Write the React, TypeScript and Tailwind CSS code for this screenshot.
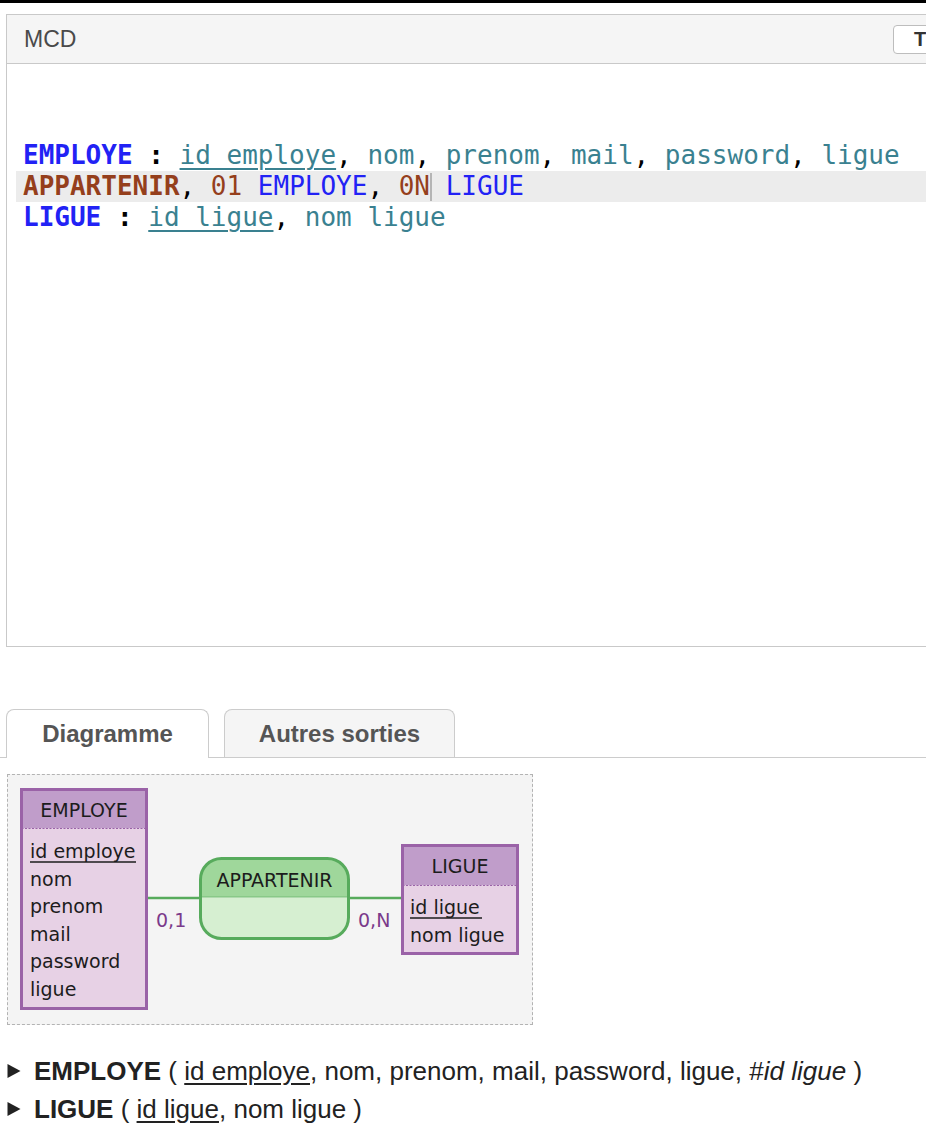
import React from 'react';

// ============================================================
// Constants
// ============================================================

const SANS = "font-['Liberation_Sans',Arial,sans-serif]";
const MONO = "font-['DejaVu_Sans_Mono',monospace]";

const C_ENTITY = 'text-[#2222f5]';
const C_ATTR = 'text-[#3a8190]';
const C_ASSOC = 'text-[#953f1c]';

// ============================================================
// Code editor
// ============================================================

const CodeEditor: React.FC = () => (
  <div className={`${MONO} h-[582px] pt-[76px] pl-[9px] text-[26px] leading-[31px] whitespace-pre`}>
    <div className="h-[31px] pl-[7px]">
      <span className={`${C_ENTITY} font-bold`}>EMPLOYE</span>
      <span className="font-bold text-black"> : </span>
      <span className={`${C_ATTR} underline underline-offset-[4px] decoration-[2px]`}>id employe</span>
      <span className="text-black">, </span>
      <span className={C_ATTR}>nom</span>
      <span className="text-black">, </span>
      <span className={C_ATTR}>prenom</span>
      <span className="text-black">, </span>
      <span className={C_ATTR}>mail</span>
      <span className="text-black">, </span>
      <span className={C_ATTR}>password</span>
      <span className="text-black">, </span>
      <span className={C_ATTR}>ligue</span>
    </div>
    <div className="h-[31px] pl-[7px] bg-[#ececec]">
      <span className={`${C_ASSOC} font-bold`}>APPARTENIR</span>
      <span className="text-black">, </span>
      <span className={C_ASSOC}>01</span>
      <span className={C_ENTITY}> EMPLOYE</span>
      <span className="text-black">, </span>
      <span className={C_ASSOC}>0N</span>
      <span className="inline-block w-[2px] h-[28px] bg-[#b5b5b5] align-[-6px] -mr-[2px]" />
      <span className={C_ENTITY}> LIGUE</span>
    </div>
    <div className="h-[31px] pl-[7px]">
      <span className={`${C_ENTITY} font-bold`}>LIGUE</span>
      <span className="font-bold text-black"> : </span>
      <span className={`${C_ATTR} underline underline-offset-[4px] decoration-[2px]`}>id ligue</span>
      <span className="text-black">, </span>
      <span className={C_ATTR}>nom ligue</span>
    </div>
  </div>
);

// ============================================================
// Diagram (drawing)
// ============================================================

const ENT_STROKE = '#9a62a7';
const ENT_HEAD = '#c09dca';
const ENT_BODY = '#e7d1e5';
const ASSOC_STROKE = '#57ab5c';
const ASSOC_HEAD = '#9fd79b';
const ASSOC_BODY = '#d6efd1';
const CARD = '#7b3a8b';
const INK = '#1c1c1c';
const DIAG_FONT = "'DejaVu Sans', Verdana, sans-serif";

const Diagram: React.FC = () => (
  <svg width={524} height={249} viewBox="0 0 524 249" fontFamily={DIAG_FONT} fontSize={19}>
    {/* links */}
    <line x1={140} y1={123} x2={192} y2={123} stroke={ASSOC_STROKE} strokeWidth={2.5} />
    <line x1={341} y1={123} x2={394} y2={123} stroke={ASSOC_STROKE} strokeWidth={2.5} />

    {/* EMPLOYE */}
    <rect x={13.5} y={14.5} width={125} height={39} fill={ENT_HEAD} />
    <rect x={13.5} y={53.5} width={125} height={180} fill={ENT_BODY} />
    <line x1={13.5} y1={53.5} x2={138.5} y2={53.5} stroke={ENT_STROKE} strokeWidth={1.2} strokeDasharray="2 1.5" />
    <rect x={13.5} y={14.5} width={125} height={219} fill="none" stroke={ENT_STROKE} strokeWidth={3} />
    <text x={76} y={42} textAnchor="middle" fill={INK}>EMPLOYE</text>
    <text x={22} y={83} fill={INK}>id employe</text>
    <line x1={22} y1={87} x2={128} y2={87} stroke={INK} strokeWidth={1.5} />
    <text x={22} y={111} fill={INK}>nom</text>
    <text x={22} y={138} fill={INK}>prenom</text>
    <text x={22} y={166} fill={INK}>mail</text>
    <text x={22} y={193} fill={INK}>password</text>
    <text x={22} y={221} fill={INK}>ligue</text>

    {/* APPARTENIR */}
    <defs>
      <clipPath id="assoc-clip">
        <rect x={192.5} y={83.5} width={148} height={80} rx={21} />
      </clipPath>
    </defs>
    <g clipPath="url(#assoc-clip)">
      <rect x={190} y={80} width={154} height={42} fill={ASSOC_HEAD} />
      <rect x={190} y={122} width={154} height={46} fill={ASSOC_BODY} />
    </g>
    <line x1={192.5} y1={122} x2={340.5} y2={122} stroke={ASSOC_STROKE} strokeWidth={1} opacity={0.6} />
    <rect x={192.5} y={83.5} width={148} height={80} rx={21} fill="none" stroke={ASSOC_STROKE} strokeWidth={3} />
    <text x={266.5} y={112} textAnchor="middle" fill={INK}>APPARTENIR</text>

    {/* cardinalities */}
    <text x={148} y={152} fill={CARD}>0,1</text>
    <text x={350} y={152} fill={CARD}>0,N</text>

    {/* LIGUE */}
    <rect x={394.5} y={70.5} width={115} height={40} fill={ENT_HEAD} />
    <rect x={394.5} y={110.5} width={115} height={68} fill={ENT_BODY} />
    <line x1={394.5} y1={110.5} x2={509.5} y2={110.5} stroke={ENT_STROKE} strokeWidth={1.2} strokeDasharray="2 1.5" />
    <rect x={394.5} y={70.5} width={115} height={108} fill="none" stroke={ENT_STROKE} strokeWidth={3} />
    <text x={452} y={98} textAnchor="middle" fill={INK}>LIGUE</text>
    <text x={402} y={139} fill={INK}>id ligue</text>
    <line x1={402} y1={143} x2={474} y2={143} stroke={INK} strokeWidth={1.5} />
    <text x={402} y={167} fill={INK}>nom ligue</text>
  </svg>
);

// ============================================================
// Relational schema rows
// ============================================================

const Caret: React.FC = () => (
  <svg width={14} height={16} viewBox="0 0 14 16" className="shrink-0">
    <polygon points="0.5,1 13.5,8 0.5,15" fill="#222" />
  </svg>
);

const SchemaRow: React.FC<{ children: React.ReactNode }> = ({ children }) => (
  <div className="flex items-center h-[38px] pl-[7px]">
    <Caret />
    <div className="ml-[13px] whitespace-pre">{children}</div>
  </div>
);

// ============================================================
// App
// ============================================================

export default function App() {
  return (
    <div className={`${SANS} w-[926px] h-[1136px] overflow-hidden bg-white relative`}>
      <div className="h-[3px] bg-black" />

      {/* MCD panel */}
      <div className="mt-[11px] ml-[6px] w-[960px] border border-[#c9c9c9]">
        <div className="h-[49px] bg-[#f5f5f5] border-b border-[#c9c9c9] flex items-center justify-between pl-[17px]">
          <span className="text-[23px] text-[#4a4a4a]">MCD</span>
          <div className="h-[29px] w-[72px] rounded-[4px] border border-[#bdbdbd] bg-white pl-[20px] flex items-center text-[20px] font-bold text-[#333]">
            T
          </div>
        </div>
        <CodeEditor />
      </div>

      {/* tabs */}
      <div className="mt-[62px] flex items-end gap-[15px] pl-[6px] border-b border-[#cccccc]">
        <div className="-mb-px h-[49px] w-[203px] rounded-t-[8px] border border-b-0 border-[#cccccc] bg-white flex items-center justify-center text-[24px] font-bold text-[#555]">
          Diagramme
        </div>
        <div className="h-[48px] w-[231px] rounded-t-[8px] border border-b-0 border-[#cccccc] bg-[#f5f5f5] flex items-center justify-center text-[24px] font-bold text-[#555]">
          Autres sorties
        </div>
      </div>

      {/* diagram */}
      <div className="mt-[16px] ml-[7px] w-[526px] h-[251px] border border-dashed border-[#b3b3b3] bg-[#f4f4f4]">
        <Diagram />
      </div>

      {/* relational schema */}
      <div className="mt-[27px] text-[26px] text-[#222]">
        <SchemaRow>
          <span className="font-bold">EMPLOYE</span>
          {' ( '}
          <span className="underline underline-offset-[3px]">id employe</span>
          {', nom, prenom, mail, password, ligue, #'}
          <span className="italic">id ligue</span>
          {' )'}
        </SchemaRow>
        <SchemaRow>
          <span className="font-bold">LIGUE</span>
          {' ( '}
          <span className="underline underline-offset-[3px]">id ligue</span>
          {', nom ligue )'}
        </SchemaRow>
      </div>
    </div>
  );
}
